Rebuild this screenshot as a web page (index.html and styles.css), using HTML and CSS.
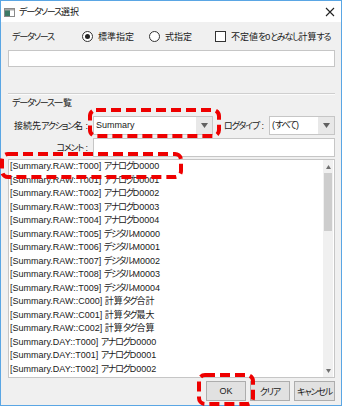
FILE: index.html
```html
<!DOCTYPE html>
<html lang="ja">
<head>
<meta charset="utf-8">
<title>データソース選択</title>
<link rel="stylesheet" href="styles.css">
</head>
<body>
<div class="stage">
  <div class="window">
    <div class="titlebar">
      <svg class="app-icon" width="11" height="9" viewBox="0 0 11 9"><rect x="0.5" y="0.5" width="10" height="8" fill="#fff" stroke="#8a8a8a"/><rect x="1" y="1" width="5" height="7" fill="#3d7a66"/><rect x="1" y="1" width="9" height="1.5" fill="#a8a8a8"/></svg>
      <span class="title"><span class="k">データソース</span>選択</span>
      <svg class="close" width="10" height="10" viewBox="0 0 10 10"><path d="M1 1 L9 9 M9 1 L1 9" stroke="#222" stroke-width="1.1" fill="none"/></svg>
    </div>
    <div class="content">
      <div class="row-source">
        <span class="source-label"><span class="k">データソース</span></span>
        <span class="radio checked"></span><span class="opt">標準指定</span>
        <span class="radio radio2"></span><span class="opt">式指定</span>
        <span class="checkbox"></span><span class="opt">不定値<span class="k">を</span>0<span class="k">とみなし</span>計算<span class="k">する</span></span>
      </div>
      <div class="textbox big"></div>
      <div class="separator"></div>
      <div class="section-title"><span class="k">データソース</span>一覧</div>
      <div class="row-combo">
        <span class="field-label">接続先<span class="k">アクション</span>名 :</span>
        <div class="combo combo1"><span class="combo-text">Summary</span><span class="combo-btn"><svg width="7" height="5" viewBox="0 0 7 5"><path d="M0 0 H7 L3.5 5 Z" fill="#606060"/></svg></span></div>
        <span class="log-label"><span class="k">ログタイプ</span> :</span>
        <div class="combo combo2"><span class="combo-text">(<span class="k">すべて</span>)</span><span class="combo-btn"><svg width="7" height="5" viewBox="0 0 7 5"><path d="M0 0 H7 L3.5 5 Z" fill="#606060"/></svg></span></div>
      </div>
      <div class="row-comment">
        <span class="field-label"><span class="k">コメント</span> :</span>
        <div class="textbox comment"></div>
      </div>
      <div class="listbox">
        <div class="items">
          <div class="item">[Summary.RAW::T000] <span class="k">アナログ</span>D0000</div>
          <div class="item">[Summary.RAW::T001] <span class="k">アナログ</span>D0001</div>
          <div class="item">[Summary.RAW::T002] <span class="k">アナログ</span>D0002</div>
          <div class="item">[Summary.RAW::T003] <span class="k">アナログ</span>D0003</div>
          <div class="item">[Summary.RAW::T004] <span class="k">アナログ</span>D0004</div>
          <div class="item">[Summary.RAW::T005] <span class="k">デジタル</span>M0000</div>
          <div class="item">[Summary.RAW::T006] <span class="k">デジタル</span>M0001</div>
          <div class="item">[Summary.RAW::T007] <span class="k">デジタル</span>M0002</div>
          <div class="item">[Summary.RAW::T008] <span class="k">デジタル</span>M0003</div>
          <div class="item">[Summary.RAW::T009] <span class="k">デジタル</span>M0004</div>
          <div class="item">[Summary.RAW::C000] 計算<span class="k">タグ</span>合計</div>
          <div class="item">[Summary.RAW::C001] 計算<span class="k">タグ</span>最大</div>
          <div class="item">[Summary.RAW::C002] 計算<span class="k">タグ</span>合算</div>
          <div class="item">[Summary.DAY::T000] <span class="k">アナログ</span>D0000</div>
          <div class="item">[Summary.DAY::T001] <span class="k">アナログ</span>D0001</div>
          <div class="item">[Summary.DAY::T002] <span class="k">アナログ</span>D0002</div>
        </div>
        <div class="scrollbar">
          <div class="sb-arrow"><svg width="5" height="4" viewBox="0 0 5 4"><path d="M0 4 H5 L2.5 0 Z" fill="#707070"/></svg></div>
          <div class="sb-thumb"></div>
          <div class="sb-track"></div>
          <div class="sb-arrow"><svg width="5" height="4" viewBox="0 0 5 4"><path d="M0 0 H5 L2.5 4 Z" fill="#707070"/></svg></div>
        </div>
      </div>
      <div class="buttons">
        <button class="btn">OK</button>
        <button class="btn"><span class="k">クリア</span></button>
        <button class="btn wide"><span class="k">キャンセル</span></button>
      </div>
    </div>
  </div>
  <svg class="marks" width="342" height="406" viewBox="0 0 342 406">
    <rect x="90" y="110" width="129" height="26" rx="6" class="mark"/>
    <rect x="2" y="154" width="179" height="23" rx="6" class="mark"/>
    <rect x="199" y="375" width="54" height="29" rx="6" class="mark"/>
  </svg>
</div>
</body>
</html>
```
FILE: styles.css
```css
* { box-sizing: border-box; }
html, body { margin: 0; padding: 0; }
body {
  width: 342px;
  height: 406px;
  overflow: hidden;
  background: #f0f0f0;
  font-family: "Liberation Sans", "Noto Sans CJK JP", sans-serif;
  font-size: 9px;
  font-feature-settings: "palt";
  color: #1a1a1a;
  white-space: nowrap;
}
.k { letter-spacing: -1.2px; }
.stage { position: relative; width: 342px; height: 406px; }
.window {
  width: 342px;
  height: 406px;
  border: 1px solid #5aa6e4;
  background: #f0f0f0;
  display: flex;
  flex-direction: column;
}
.titlebar {
  height: 21px;
  background: #fff;
  display: flex;
  align-items: center;
  padding-left: 3px;
  padding-right: 6px;
}
.app-icon { margin-top: 1px; }
.title { margin-left: 4px; font-size: 9px; color: #111; }
.close { margin-left: auto; margin-top: 1px; }
.content {
  padding: 0 6px 0 7px;
  display: flex;
  flex-direction: column;
}
.row-source {
  margin-top: 7px;
  height: 14px;
  display: flex;
  align-items: center;
}
.row-source > span { flex: none; }
.source-label { width: 74px; padding-left: 4px; }
.radio {
  width: 11px;
  height: 11px;
  border: 1px solid #333;
  border-radius: 50%;
  background: #fff;
  display: flex;
  align-items: center;
  justify-content: center;
}
.radio.checked::after {
  content: "";
  width: 5px;
  height: 5px;
  border-radius: 50%;
  background: #222;
}
.radio2 { margin-left: 15px; }
.opt { margin-left: 5px; }
.checkbox {
  width: 11px;
  height: 11px;
  border: 1px solid #333;
  background: #fff;
  margin-left: 23px;
}
.textbox {
  background: #fff;
  border: 1px solid #c6c6c6;
}
.textbox.big { margin-top: 7px; height: 17px; }
.separator {
  margin-top: 26px;
  height: 2px;
  border-top: 1px solid #cfcfcf;
  border-bottom: 1px solid #fbfbfb;
}
.section-title {
  margin-top: 1px;
  height: 14px;
  line-height: 14px;
  padding-left: 4px;
}
.row-combo {
  margin-top: 6px;
  height: 19px;
  display: flex;
  align-items: center;
}
.field-label { width: 80px; text-align: right; flex: none; }
.combo {
  height: 19px;
  background: #fff;
  border: 1px solid #c6c6c6;
  display: flex;
  align-items: stretch;
}
.combo1 { width: 120px; margin-left: 5px; flex: none; }
.combo2 { flex: 1; margin-left: 5px; }
.combo-text { flex: 1; padding-left: 2px; line-height: 17px; }
.combo-btn {
  width: 16px;
  background: #e8e8e8;
  display: flex;
  align-items: center;
  justify-content: center;
}
.log-label { margin-left: 11px; flex: none; }
.row-comment {
  margin-top: 3px;
  height: 19px;
  display: flex;
  align-items: center;
}
.textbox.comment { flex: 1; height: 19px; margin-left: 5px; }
.listbox {
  margin-top: 2px;
  height: 219px;
  background: #fff;
  border: 1px solid #c6c6c6;
  display: flex;
  overflow: hidden;
}
.items { flex: 1; padding-left: 1px; overflow: hidden; }
.item { height: 13.5px; line-height: 13.5px; }
.scrollbar {
  width: 10px;
  background: #f0f0f0;
  display: flex;
  flex-direction: column;
  margin-right: 1px;
}
.sb-arrow {
  height: 13px;
  display: flex;
  align-items: center;
  justify-content: center;
}
.sb-thumb {
  height: 58px;
  margin: 0 1px;
  background: #cdcdcd;
}
.sb-track { flex: 1; }
.buttons {
  margin-top: 3px;
  height: 20px;
  display: flex;
  justify-content: flex-end;
  gap: 4px;
}
.btn {
  width: 40px;
  height: 20px;
  padding: 0;
  background: #e1e1e1;
  border: 1px solid #adadad;
  font-family: inherit;
  font-size: 9px;
  font-feature-settings: "palt";
  color: #1a1a1a;
  white-space: nowrap;
}
.btn.wide { width: 41px; }
.marks { position: absolute; top: 0; left: 0; pointer-events: none; }
.mark {
  fill: none;
  stroke: #ee0000;
  stroke-width: 4;
  stroke-dasharray: 10 5;
}
```
